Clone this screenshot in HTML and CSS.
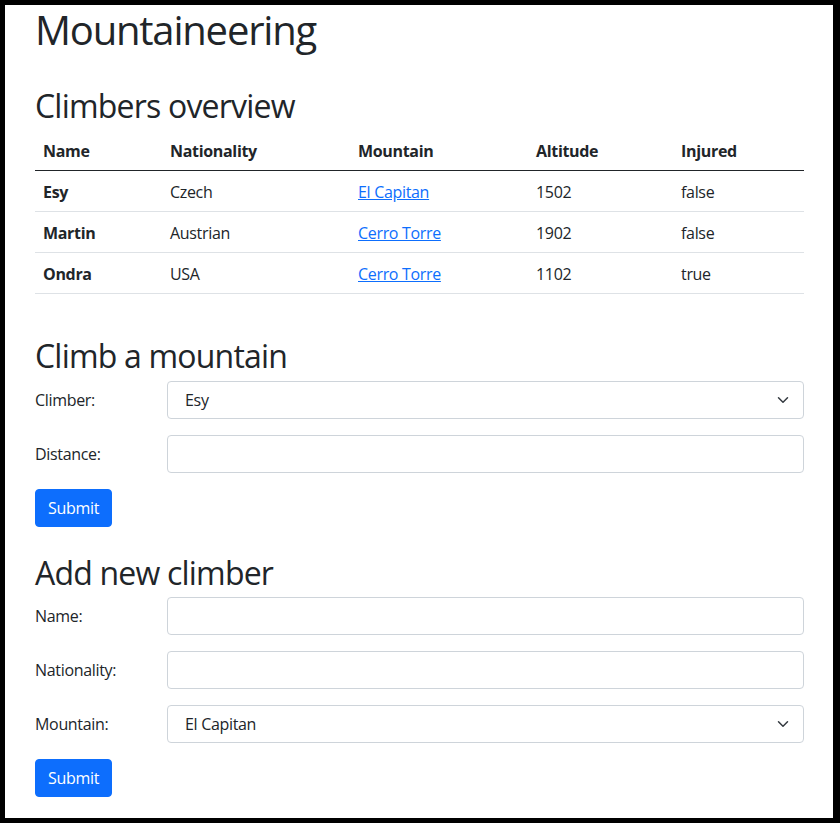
FILE: index.html
```html
<!DOCTYPE html>
<html lang="en">
<head>
<meta charset="utf-8">
<title>Mountaineering</title>
<link rel="stylesheet" href="styles.css">
</head>
<body>
<main class="page">
  <h1 class="title">Mountaineering</h1>

  <section class="block">
    <h2 class="heading">Climbers overview</h2>
    <table class="table">
      <thead>
        <tr>
          <th class="col-name">Name</th>
          <th class="col-nat">Nationality</th>
          <th class="col-mtn">Mountain</th>
          <th class="col-alt">Altitude</th>
          <th class="col-inj">Injured</th>
        </tr>
      </thead>
      <tbody>
        <tr>
          <th>Esy</th>
          <td>Czech</td>
          <td><a href="#">El Capitan</a></td>
          <td>1502</td>
          <td>false</td>
        </tr>
        <tr>
          <th>Martin</th>
          <td>Austrian</td>
          <td><a href="#">Cerro Torre</a></td>
          <td>1902</td>
          <td>false</td>
        </tr>
        <tr>
          <th>Ondra</th>
          <td>USA</td>
          <td><a href="#">Cerro Torre</a></td>
          <td>1102</td>
          <td>true</td>
        </tr>
      </tbody>
    </table>
  </section>

  <section class="block">
    <h2 class="heading">Climb a mountain</h2>
    <form class="form">
      <div class="field">
        <label class="label" for="climber">Climber:</label>
        <div class="control select-wrap">
          <select class="input select" id="climber">
            <option>Esy</option>
            <option>Martin</option>
            <option>Ondra</option>
          </select>
          <svg class="chevron" viewBox="0 0 16 16" width="12" height="12" aria-hidden="true"><path d="M2 5l6 6 6-6" fill="none" stroke="#343a40" stroke-width="2" stroke-linecap="round" stroke-linejoin="round"/></svg>
        </div>
      </div>
      <div class="field">
        <label class="label" for="distance">Distance:</label>
        <div class="control">
          <input class="input" id="distance" type="text">
        </div>
      </div>
      <button class="btn" type="button">Submit</button>
    </form>
  </section>

  <section class="block">
    <h2 class="heading">Add new climber</h2>
    <form class="form">
      <div class="field">
        <label class="label" for="name">Name:</label>
        <div class="control">
          <input class="input" id="name" type="text">
        </div>
      </div>
      <div class="field">
        <label class="label" for="nationality">Nationality:</label>
        <div class="control">
          <input class="input" id="nationality" type="text">
        </div>
      </div>
      <div class="field">
        <label class="label" for="mountain">Mountain:</label>
        <div class="control select-wrap">
          <select class="input select" id="mountain">
            <option>El Capitan</option>
            <option>Cerro Torre</option>
          </select>
          <svg class="chevron" viewBox="0 0 16 16" width="12" height="12" aria-hidden="true"><path d="M2 5l6 6 6-6" fill="none" stroke="#343a40" stroke-width="2" stroke-linecap="round" stroke-linejoin="round"/></svg>
        </div>
      </div>
      <button class="btn" type="button">Submit</button>
    </form>
  </section>
</main>
</body>
</html>
```

FILE: styles.css
```css
html {
  background: #000;
}

body {
  margin: 5px 7px 5px 5px;
  min-height: calc(100vh - 10px);
  background: #fff;
  color: #212529;
  font-family: "Open Sans", "Noto Sans", sans-serif;
  font-size: 16px;
  line-height: 1.5;
  letter-spacing: -0.02em;
}

.page {
  padding: 0 29px 0 30px;
}

.title {
  margin: 0 0 6px;
  padding-top: 1px;
  font-size: 40px;
  font-weight: 400;
  line-height: 1.2;
  letter-spacing: -0.03em;
}

.block {
  padding-top: 24px;
}

.heading {
  margin: 0 0 5px;
  padding-top: 3px;
  font-size: 32px;
  font-weight: 400;
  line-height: 1.2;
  letter-spacing: -0.025em;
}

.table {
  width: 100%;
  margin: 0 0 16px;
  border-collapse: collapse;
  table-layout: fixed;
}

.table th,
.table td {
  padding: 9px 8px 7px;
  text-align: left;
  vertical-align: top;
  border-bottom: 1px solid #dee2e6;
}

.table th {
  font-weight: 700;
}

.table thead th {
  border-bottom-color: #212529;
}

.col-name { width: 111px; }
.col-nat { width: 172px; }
.col-mtn { width: 162px; }
.col-alt { width: 129px; }
.col-inj { width: auto; }

.table a {
  color: #0d6efd;
  text-decoration: underline;
}

.form {
  margin: 0;
}

.field {
  display: flex;
  margin-bottom: 16px;
}

.label {
  width: 132px;
  flex: none;
  padding: 7px 0;
}

.control {
  flex: 1;
  min-width: 0;
}

.select-wrap {
  position: relative;
}

.input {
  display: block;
  box-sizing: border-box;
  width: 100%;
  height: 38px;
  margin: 0;
  padding: 6px 12px;
  font-family: inherit;
  font-size: 16px;
  line-height: 24px;
  letter-spacing: inherit;
  color: #212529;
  background: #fff;
  border: 1px solid #ced4da;
  border-radius: 4px;
}

.select {
  appearance: none;
  -webkit-appearance: none;
  padding: 6px 36px 6px 17px;
}

.chevron {
  position: absolute;
  right: 15px;
  top: 50%;
  transform: translateY(-50%);
  pointer-events: none;
}

.btn {
  display: inline-block;
  box-sizing: border-box;
  height: 38px;
  padding: 6px 12px;
  font-family: inherit;
  font-size: 16px;
  line-height: 24px;
  letter-spacing: inherit;
  color: #fff;
  background: #0d6efd;
  border: 1px solid #0d6efd;
  border-radius: 4px;
}
```
